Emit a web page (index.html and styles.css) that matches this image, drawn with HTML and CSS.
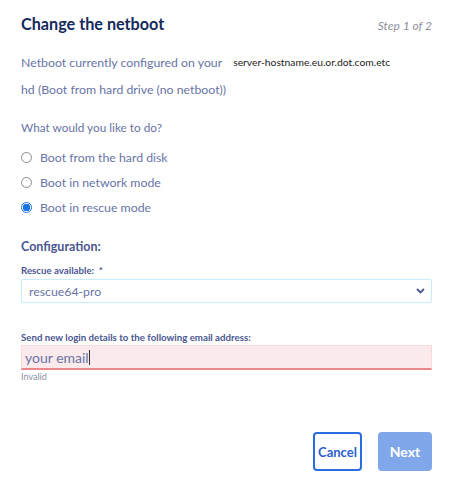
FILE: index.html
```html
<!DOCTYPE html>
<html>
<head>
<meta charset="utf-8">
<link rel="stylesheet" href="styles.css">
</head>
<body>
<div class="modal">
  <div class="header">
    <h1 class="title">Change the netboot</h1>
    <span class="step">Step 1 of 2</span>
  </div>
  <div class="current">
    <span class="muted">Netboot currently configured on your</span>
    <span class="host">server-hostname.eu.or.dot.com.etc</span>
  </div>
  <div class="muted hd">hd (Boot from hard drive (no netboot))</div>
  <div class="muted question">What would you like to do?</div>
  <div class="radios">
    <label class="radio"><span class="dot"></span><span>Boot from the hard disk</span></label>
    <label class="radio"><span class="dot"></span><span>Boot in network mode</span></label>
    <label class="radio"><span class="dot on"></span><span>Boot in rescue mode</span></label>
  </div>
  <div class="section">Configuration:</div>
  <div class="field">
    <div class="label">Rescue available:&nbsp; *</div>
    <div class="select">
      <span>rescue64-pro</span>
      <svg class="chev" width="9" height="6" viewBox="0 0 9 6"><path d="M1 1 L4.5 4.5 L8 1" fill="none" stroke="#4a5690" stroke-width="1.8"/></svg>
    </div>
  </div>
  <div class="field email-field">
    <div class="label">Send new login details to the following email address:</div>
    <div class="input"><span>your email</span><span class="caret"></span></div>
    <div class="error">Invalid</div>
  </div>
  <div class="actions">
    <button class="btn cancel">Cancel</button>
    <button class="btn next">Next</button>
  </div>
</div>
</body>
</html>
```

FILE: styles.css
```css
html, body {
  margin: 0;
  padding: 0;
  background: #ffffff;
}
body {
  font-family: Lato, "Noto Sans", sans-serif;
  color: #5b6899;
  width: 453px;
  height: 480px;
  overflow: hidden;
}
.modal {
  padding: 0 21px;
  display: flex;
  flex-direction: column;
}
.header {
  display: flex;
  justify-content: space-between;
  align-items: baseline;
  padding-top: 14px;
  height: 21px;
}
.title {
  margin: 0;
  font-size: 16.2px;
  font-weight: 700;
  color: #142a5c;
}
.step {
  font-size: 12px;
  font-style: italic;
  color: #8c8f9c;
}
.muted {
  font-size: 12.3px;
  color: #6874a6;
}
.current {
  margin-top: 17px;
  display: flex;
  align-items: center;
  gap: 11px;
  height: 20px;
}
.host {
  font-size: 10.3px;
  color: #222;
}
.hd {
  margin-top: 8px;
  height: 20px;
  line-height: 20px;
}
.question {
  margin-top: 18px;
  height: 20px;
  line-height: 20px;
  font-size: 11.8px;
}
.radios {
  margin-top: 9px;
  display: flex;
  flex-direction: column;
  gap: 5px;
}
.radio {
  display: flex;
  align-items: center;
  gap: 8px;
  height: 20px;
  font-size: 12.3px;
  color: #6874a6;
}
.dot {
  width: 9px;
  height: 9px;
  border: 1.5px solid #8a8a8a;
  border-radius: 50%;
  margin-left: 0;
  box-sizing: content-box;
  background: #fff;
}
.dot.on {
  border-color: #1a73e8;
  background: radial-gradient(circle, #1a73e8 0 3.5px, #fff 4px);
}
.section {
  margin-top: 20px;
  font-size: 12.5px;
  font-weight: 700;
  color: #4a5690;
  height: 20px;
  line-height: 20px;
}
.field {
  margin-top: 6px;
  display: flex;
  flex-direction: column;
}
.label {
  font-size: 9.7px;
  font-weight: 700;
  color: #4a5690;
  height: 14px;
  line-height: 14px;
}
.select {
  margin-top: 2px;
  height: 22px;
  border: 1px solid #c7ecfb;
  border-radius: 2px;
  display: flex;
  align-items: center;
  justify-content: space-between;
  padding: 0 6px 0 7px;
  font-size: 12.3px;
  color: #6874a6;
}
.chev {
  display: block;
}
.email-field {
  margin-top: 27px;
}
.input {
  margin-top: 1px;
  height: 22px;
  background: #fbeaec;
  border: 1px solid #fadadd;
  border-bottom: 2px solid #e9878b;
  display: flex;
  align-items: center;
  padding-left: 3px;
  font-size: 14px;
  color: #6874a6;
}
.caret {
  width: 1px;
  height: 15px;
  background: #333;
}
.error {
  margin-top: 1px;
  font-size: 9px;
  color: #8c8f9c;
}
.actions {
  margin-top: 50px;
  display: flex;
  justify-content: flex-end;
  gap: 16px;
}
.btn {
  height: 39px;
  border-radius: 4px;
  font-family: Lato, "Noto Sans", sans-serif;
  font-weight: 700;
  font-size: 13px;
  padding: 0;
}
.cancel {
  width: 49px;
  background: #fff;
  border: 2px solid #2a6de0;
  color: #2a5ecf;
}
.next {
  width: 54px;
  background: #7fa7ea;
  border: none;
  color: #fff;
  font-size: 14px;
}
```
